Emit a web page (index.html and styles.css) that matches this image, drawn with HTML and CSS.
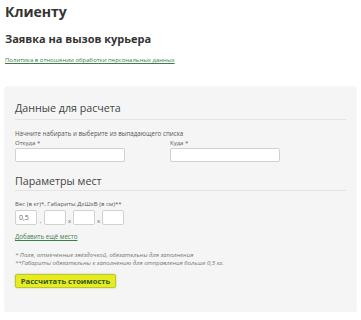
FILE: index.html
```html
<!DOCTYPE html>
<html lang="ru">
<head>
  <meta charset="UTF-8">
  <title>Клиенту</title>
  <link rel="stylesheet" href="styles.css">
</head>
<body>
  <div class="page">
    <h1>Клиенту</h1>
    <h2>Заявка на вызов курьера</h2>
    <a href="#" class="policy">Политика в отношении обработки персональных данных</a>

    <form class="calc">
      <h3>Данные для расчета</h3>
      <p class="hint">Начните набирать и выберите из выпадающего списка</p>
      <div class="row">
        <div class="field">
          <label for="from">Откуда *</label>
          <input type="text" id="from">
        </div>
        <div class="field">
          <label for="to">Куда *</label>
          <input type="text" id="to">
        </div>
      </div>

      <h3 class="second">Параметры мест</h3>
      <label class="small-label">Вес (в кг)*, Габариты ДхШхВ (в см)**</label>
      <div class="dims">
        <input type="text" class="dim" value="0,5">
        <span class="sep">,</span>
        <input type="text" class="dim">
        <span class="sep">x</span>
        <input type="text" class="dim">
        <span class="sep">x</span>
        <input type="text" class="dim">
      </div>
      <a href="#" class="add">Добавить ещё место</a>

      <p class="note">* Поля, отмеченные звёздочкой, обязательны для заполнения<br>
        **Габариты обязательны к заполнению для отправления больше 0,5 кг.</p>

      <button type="submit">Рассчитать стоимость</button>
    </form>
  </div>
</body>
</html>
```

FILE: styles.css
```css
body {
  margin: 0;
  font-family: "Open Sans", Arial, sans-serif;
  color: #333;
  background: #fff;
}

.page {
  padding: 3px 5px 0 5px;
}

h1 {
  margin: 0;
  font-size: 14px;
  line-height: 18px;
  font-weight: 700;
  color: #333;
}

h2 {
  margin: 11px 0 0;
  font-size: 11px;
  line-height: 14px;
  font-weight: 700;
  color: #333;
}

.policy {
  display: block;
  width: fit-content;
  margin-top: 10px;
  font-size: 6px;
  line-height: 8px;
  color: #3d7d4a;
}

.calc {
  margin-top: 23px;
  width: 331px;
  padding: 14px 10px 24px;
  background: #f4f5f4;
  border-radius: 3px;
  box-shadow: 0 0 2px rgba(0, 0, 0, 0.12);
}

h3 {
  margin: 0;
  padding-bottom: 4px;
  border-bottom: 1px solid #e2e4e2;
  font-size: 10.7px;
  line-height: 14px;
  font-weight: 400;
  color: #444;
}

h3.second {
  margin-top: 12px;
  padding-bottom: 2px;
}

.hint {
  margin: 10px 0 0;
  font-size: 6.2px;
  line-height: 8px;
  color: #555;
}

.row {
  display: flex;
  gap: 45px;
  margin-top: 1px;
}

.field label,
.small-label {
  display: block;
  font-size: 6px;
  line-height: 8px;
  color: #555;
}

.field input {
  display: block;
  width: 110px;
  height: 14px;
  margin-top: 1px;
  box-sizing: border-box;
  border: 1px solid #cfd2cf;
  border-radius: 2px;
  background: #fff;
}

.small-label {
  margin-top: 9px;
}

.dims {
  display: flex;
  align-items: flex-end;
  margin-top: 2px;
}

.dim {
  width: 22px;
  height: 15px;
  box-sizing: border-box;
  padding: 0 3px;
  border: 1px solid #cfd2cf;
  border-radius: 2px;
  background: #fff;
  font-family: inherit;
  font-size: 7px;
  color: #666;
}

.sep {
  width: 7px;
  text-align: center;
  font-size: 6px;
  line-height: 8px;
  color: #666;
}

.add {
  display: block;
  width: fit-content;
  margin-top: 8px;
  font-size: 6.2px;
  line-height: 8px;
  color: #3d7d4a;
}

.note {
  margin: 10px 0 0;
  font-size: 6px;
  line-height: 8px;
  font-style: italic;
  color: #777;
}

button {
  display: block;
  margin-top: 7px;
  width: 101px;
  height: 14px;
  padding: 0;
  border: 1px solid #b6c93a;
  border-radius: 2px;
  background: #e8ec1c;
  box-shadow: 0 0 2px rgba(120, 140, 0, 0.4);
  font-family: inherit;
  font-size: 7.6px;
  font-weight: 700;
  color: #2f5a1c;
  cursor: pointer;
}
```
